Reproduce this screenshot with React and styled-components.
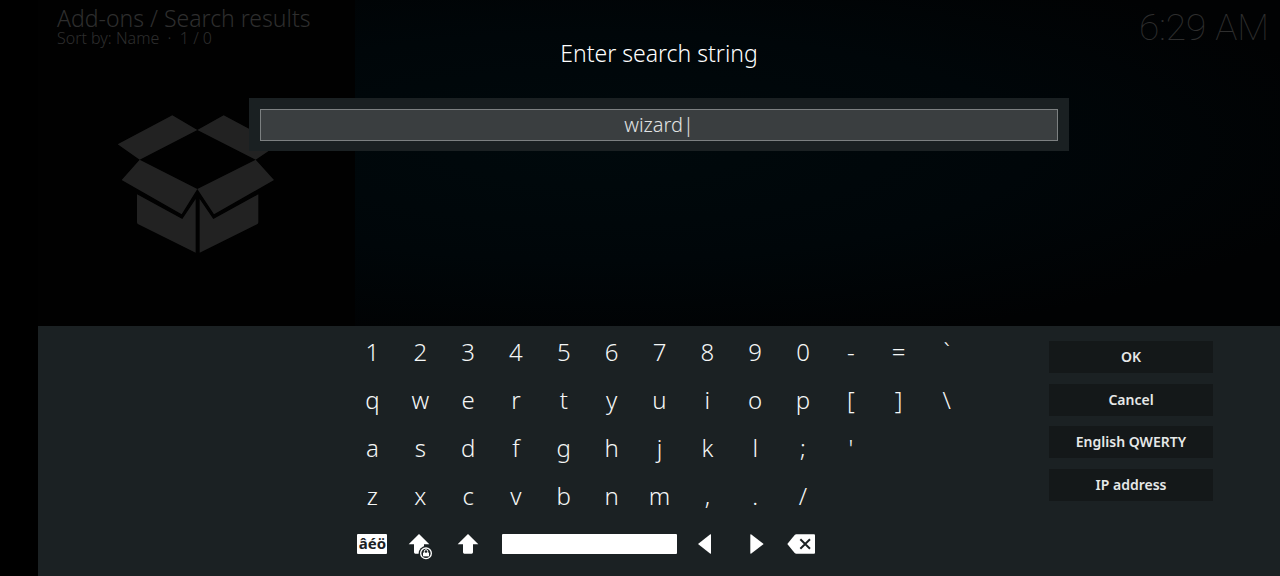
import React, { useState } from "react";
import styled, { createGlobalStyle } from "styled-components";

const GlobalStyle = createGlobalStyle`
  * { box-sizing: border-box; }
  body {
    margin: 0;
    background: #000;
    color: #e6e8e8;
    font-family: "Noto Sans", "Open Sans", sans-serif;
  }
  button, input { font: inherit; color: inherit; border: 0; margin: 0; }
`;

const Screen = styled.div`
  display: flex;
  flex-direction: column;
  min-height: 100vh;
  padding-left: 38px;
  background: #000;
`;

const Stage = styled.div`
  flex: 1;
  display: grid;
  grid-template: 1fr / 1fr;
  > * { grid-area: 1 / 1; }
`;

const Browser = styled.div`
  display: grid;
  grid-template: auto 1fr / 317px 1fr;
  background:
    linear-gradient(90deg, #010101 317px, transparent 317px),
    radial-gradient(ellipse at 45% 45%, #00090c 0%, #000609 45%, #010203 80%);
`;

const TopBar = styled.header`
  grid-column: 1 / -1;
  display: flex;
  justify-content: space-between;
  padding: 6px 11px 0 19px;
  color: #2e2e2e;
`;

const Heading = styled.h1`
  margin: 0;
  font-size: 23px;
  line-height: 24px;
  font-weight: 300;
`;

const SortLine = styled.p`
  margin: 0;
  font-size: 16px;
  font-weight: 300;
  line-height: 17px;
  white-space: pre;
`;

const Clock = styled.time`
  font-family: Roboto, sans-serif;
  font-weight: 100;
  font-size: 37px;
  line-height: 44px;
`;

const Artwork = styled.div`
  padding: 63px 0 0 79px;
  svg { display: block; width: 159px; height: 142px; fill: #222; }
`;

const Dialog = styled.form`
  display: flex;
  flex-direction: column;
  align-items: center;
  padding-top: 36px;
`;

const DialogTitle = styled.label`
  font-size: 23px;
  font-weight: 300;
  line-height: 34px;
  color: #fff;
`;

const FieldFrame = styled.div`
  width: 66%;
  margin-top: 28px;
  padding: 11px 11px 10px;
  background: #1a2022;
`;

const Field = styled.input`
  display: block;
  width: 100%;
  height: 32px;
  padding: 0 0 2px;
  border: 1px solid #7c8081;
  background: #3a3e40;
  color: #e0e2e3;
  font-size: 20px;
  font-weight: 300;
  text-align: center;
  outline: none;
`;

const Keyboard = styled.section`
  display: flex;
  padding: 2px 67px 8px 25%;
  background: #1b2123;
`;

const Keys = styled.div`
  flex: 0 0 622px;
  display: grid;
  grid-template-columns: repeat(13, 1fr);
  grid-auto-rows: 48px;
`;

const Key = styled.button`
  display: flex;
  align-items: center;
  justify-content: center;
  grid-column: ${(p) => p.$column || "auto"};
  padding: 0;
  background: none;
  color: #f4f6f6;
  font-size: 24px;
  font-weight: 300;
  line-height: 48px;
  svg { display: block; flex: none; fill: #fff; }
`;

const Accents = styled.span`
  width: 30px;
  height: 20px;
  border-radius: 1px;
  background: #fff;
  color: #1b2123;
  font-size: 15px;
  font-weight: 700;
  line-height: 19px;
  text-align: center;
`;

const SpaceBar = styled.span`
  flex: 1;
  height: 20px;
  margin: 0 6px 0 10px;
  border-radius: 1px;
  background: #fff;
`;

const Actions = styled.div`
  flex: 0 0 164px;
  display: flex;
  flex-direction: column;
  justify-content: space-between;
  height: 160px;
  margin: 13px 0 0 auto;
`;

const Action = styled.button`
  height: 32px;
  padding: 0;
  background: #141819;
  font-size: 14px;
  font-weight: 600;
  line-height: 30px;
`;

const ROWS = [
  [..."1234567890-=`"],
  [..."qwertyuiop[]\\"],
  [..."asdfghjkl;'"],
  [..."zxcvbnm,./"],
];

const ACTIONS = ["OK", "Cancel", "English QWERTY", "IP address"];

const BoxIcon = () => (
  <svg viewBox="351 339 477 426" aria-hidden="true">
    <path d="M353 433 517 346 592 390 419 479ZM592 390 671 346 835 433 767 479Z" />
    <path d="M419 479 592 567 545 643 365 540ZM767 479 822 540 642 643 592 567Z" />
    <path d="M411 583 547 657 587 597V758L415 673Q411 671 411 667ZM599 597 640 657 775 583V667Q775 671 771 673L599 758Z" />
  </svg>
);

const CapsIcon = () => (
  <svg viewBox="204 54 75 96" width="25" height="32" aria-hidden="true">
    <path d="M237 72 268 103H252V127Q252 131 248 131H226Q222 131 222 127V103H206Z" />
    <circle cx="258" cy="130" r="22" fill="#1b2123" />
    <circle cx="258" cy="130" r="16" fill="none" stroke="#fff" strokeWidth="4" />
    <rect x="249" y="128" width="18" height="11" fill="#fff" />
    <path d="M253 129V124Q253 119 258 119T263 124V129" fill="none" stroke="#fff" strokeWidth="3" />
  </svg>
);

const ShiftIcon = () => (
  <svg viewBox="348 54 72 96" width="24" height="32" aria-hidden="true">
    <path d="M384 72 415 103H399V127Q399 131 395 131H373Q369 131 369 127V103H353Z" />
  </svg>
);

const LeftIcon = () => (
  <svg viewBox="282 54 78 96" width="26" height="32" aria-hidden="true">
    <path d="M294 102 331 73Q333 72 333 75V129Q333 132 331 131Z" />
  </svg>
);

const RightIcon = () => (
  <svg viewBox="426 54 78 96" width="26" height="32" aria-hidden="true">
    <path d="M491 102 453 73Q451 72 451 75V129Q451 132 453 131Z" />
  </svg>
);

const BackspaceIcon = () => (
  <svg viewBox="555 54 108 96" width="36" height="32" aria-hidden="true">
    <path d="M562 102 584 75Q586 73 589 73H642Q645 73 645 76V128Q645 131 642 131H589Q586 131 584 129Z" />
    <path d="M601 88 630 116M630 88 601 116" stroke="#1b2123" strokeWidth="6" />
  </svg>
);

export default function App() {
  const [text, setText] = useState("wizard|");
  const type = (c) => setText((t) => t.replace("|", "") + c + "|");

  return (
    <>
      <GlobalStyle />
      <Screen>
        <Stage>
          <Browser>
            <TopBar>
              <div>
                <Heading>Add-ons / Search results</Heading>
                <SortLine>{"Sort by: Name  ·  1 / 0"}</SortLine>
              </div>
              <Clock>6:29 AM</Clock>
            </TopBar>
            <Artwork>
              <BoxIcon />
            </Artwork>
          </Browser>
          <Dialog onSubmit={(e) => e.preventDefault()}>
            <DialogTitle htmlFor="search">Enter search string</DialogTitle>
            <FieldFrame>
              <Field id="search" value={text} onChange={(e) => setText(e.target.value)} />
            </FieldFrame>
          </Dialog>
        </Stage>
        <Keyboard>
          <Keys>
            {ROWS.map((row) =>
              row.map((c, i) => (
                <Key key={c} type="button" $column={String(i + 1)} onClick={() => type(c)}>
                  {c}
                </Key>
              ))
            )}
            <Key type="button" $column="1">
              <Accents>âéö</Accents>
            </Key>
            <Key type="button" aria-label="Caps lock"><CapsIcon /></Key>
            <Key type="button" aria-label="Shift"><ShiftIcon /></Key>
            <Key type="button" aria-label="Space" $column="span 4" onClick={() => type(" ")}>
              <SpaceBar />
            </Key>
            <Key type="button" aria-label="Cursor left"><LeftIcon /></Key>
            <Key type="button" aria-label="Cursor right"><RightIcon /></Key>
            <Key type="button" aria-label="Backspace"><BackspaceIcon /></Key>
          </Keys>
          <Actions>
            {ACTIONS.map((label) => (
              <Action key={label} type="button">{label}</Action>
            ))}
          </Actions>
        </Keyboard>
      </Screen>
    </>
  );
}
